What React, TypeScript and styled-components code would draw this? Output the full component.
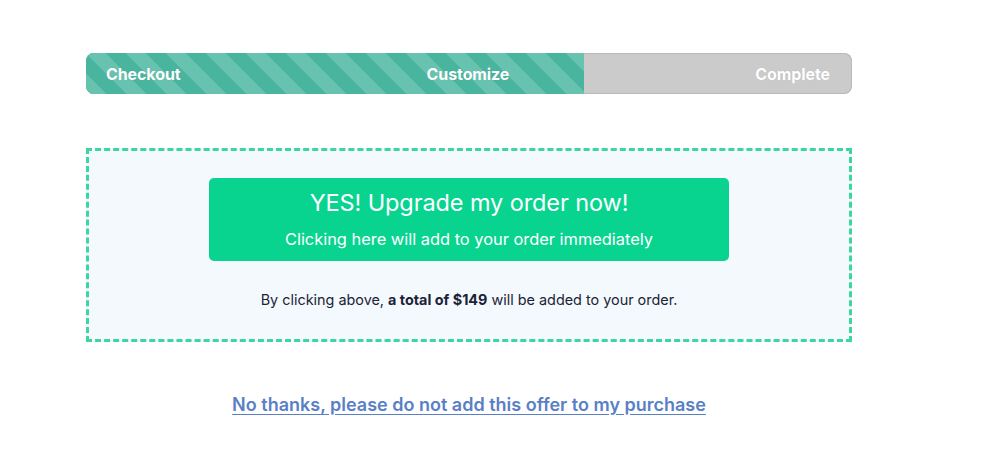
import React from "react";
import styled, { createGlobalStyle } from "styled-components";

const Global = createGlobalStyle`
  html, body { margin: 0; padding: 0; background: #ffffff; }
  body { font-family: "Inter", "Open Sans", sans-serif; }
`;

const Page = styled.div`
  width: 766px;
  margin-left: 86px;
  padding-top: 53px;
  display: flex;
  flex-direction: column;
`;

const Progress = styled.div`
  position: relative;
  height: 41px;
  border-radius: 8px;
  background: #cbcbcb;
  box-shadow: inset 0 0 0 1px #b9b9b9;
  overflow: hidden;
  display: flex;
  align-items: center;
`;

const Fill = styled.div<{ $pct: number }>`
  position: absolute;
  left: 0;
  top: 0;
  bottom: 0;
  width: ${(p) => p.$pct}%;
  background-color: #4ab59f;
  background-image: linear-gradient(
    45deg,
    #67c3b0 25%,
    transparent 25%,
    transparent 50%,
    #67c3b0 50%,
    #67c3b0 75%,
    transparent 75%,
    transparent
  );
  background-size: 40px 40px;
`;

const Labels = styled.div`
  position: relative;
  flex: 1;
  display: flex;
  justify-content: space-between;
  align-items: center;
  padding: 0 22px 0 20px;
`;

const Label = styled.span`
  color: #ffffff;
  font-weight: 700;
  font-size: 16px;
  letter-spacing: -0.1px;
  text-shadow: 0 0 1px rgba(0, 0, 0, 0.15);
`;

const OfferBox = styled.div`
  margin-top: 54px;
  height: 194px;
  box-sizing: border-box;
  border: 3px dashed #3dd6a0;
  background: #f4f9fd;
  display: flex;
  flex-direction: column;
  align-items: center;
  padding-top: 27px;
`;

const UpgradeButton = styled.button`
  width: 520px;
  height: 83px;
  border: none;
  border-radius: 5px;
  background: #08d490;
  color: #ffffff;
  display: flex;
  flex-direction: column;
  align-items: center;
  justify-content: center;
  gap: 14px;
  cursor: pointer;
  font-family: inherit;
  padding: 0 0 1px;
`;

const ButtonTitle = styled.span`
  font-size: 23.5px;
  line-height: 26px;
  font-weight: 400;
  letter-spacing: -0.1px;
`;

const ButtonSub = styled.span`
  font-size: 16.4px;
  line-height: 19px;
  font-weight: 400;
`;

const Note = styled.p`
  margin: 30px 0 0;
  font-size: 14.4px;
  color: #1b2437;
  b { font-weight: 700; }
`;

const Decline = styled.a`
  align-self: center;
  margin-top: 52px;
  font-size: 18px;
  font-weight: 600;
  color: #5a7fc6;
  text-decoration: underline;
  text-underline-offset: 3px;
  cursor: pointer;
`;

export default function App() {
  return (
    <>
      <Global />
      <Page>
        <Progress>
          <Fill $pct={65} />
          <Labels>
            <Label>Checkout</Label>
            <Label>Customize</Label>
            <Label>Complete</Label>
          </Labels>
        </Progress>
        <OfferBox>
          <UpgradeButton>
            <ButtonTitle>YES! Upgrade my order now!</ButtonTitle>
            <ButtonSub>Clicking here will add to your order immediately</ButtonSub>
          </UpgradeButton>
          <Note>
            By clicking above, <b>a total of $149</b> will be added to your order.
          </Note>
        </OfferBox>
        <Decline>No thanks, please do not add this offer to my purchase</Decline>
      </Page>
    </>
  );
}
